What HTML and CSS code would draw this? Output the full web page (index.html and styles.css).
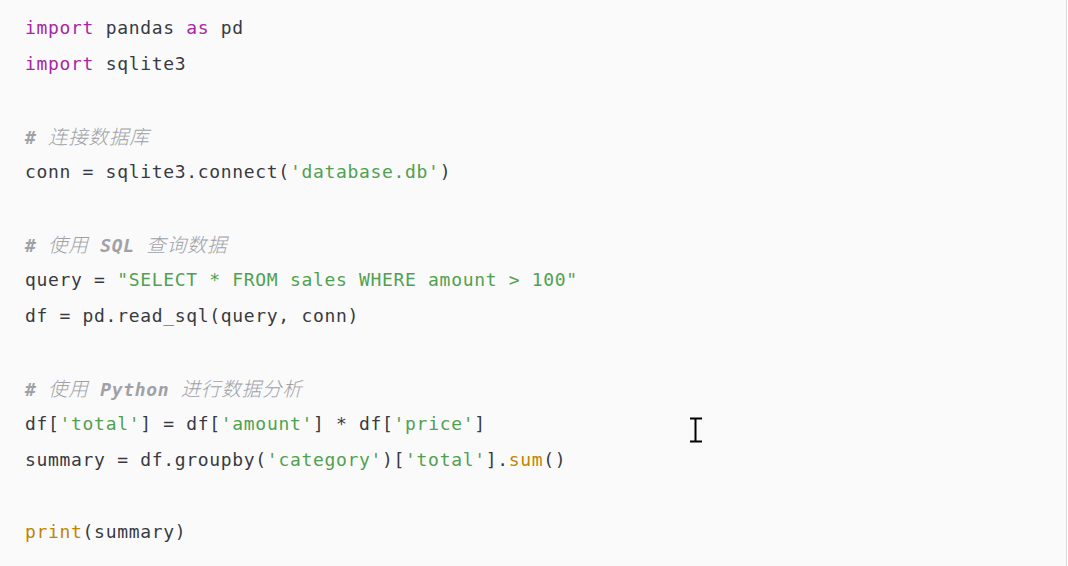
FILE: index.html
```html
<!DOCTYPE html>
<html lang="zh-CN">
<head>
<meta charset="utf-8">
<title>code</title>
<link rel="stylesheet" href="styles.css">
</head>
<body>
<div class="code-block">
<div class="code">
<div class="line"><span class="kw">import</span> pandas <span class="kw">as</span> pd</div>
<div class="line"><span class="kw">import</span> sqlite3</div>
<div class="line"> </div>
<div class="line"><span class="cm"><span class="lt">#</span> <span class="zh">连接数据库</span></span></div>
<div class="line">conn = sqlite3.connect(<span class="st">'database.db'</span>)</div>
<div class="line"> </div>
<div class="line"><span class="cm"><span class="lt">#</span> <span class="zh">使用</span> <span class="lt">SQL</span> <span class="zh">查询数据</span></span></div>
<div class="line">query = <span class="st">"SELECT * FROM sales WHERE amount &gt; 100"</span></div>
<div class="line">df = pd.read_sql(query, conn)</div>
<div class="line"> </div>
<div class="line"><span class="cm"><span class="lt">#</span> <span class="zh">使用</span> <span class="lt">Python</span> <span class="zh">进行数据分析</span></span></div>
<div class="line">df[<span class="st">'total'</span>] = df[<span class="st">'amount'</span>] * df[<span class="st">'price'</span>]</div>
<div class="line">summary = df.groupby(<span class="st">'category'</span>)[<span class="st">'total'</span>].<span class="fn">sum</span>()</div>
<div class="line"> </div>
<div class="line"><span class="fn">print</span>(summary)</div>
</div>
<svg class="cursor" width="14" height="26" viewBox="0 0 14 26" aria-hidden="true">
<path d="M1 1.5h12M1 24.5h12M6.5 1.5v23" stroke="#000" stroke-width="2" fill="none"/>
</svg>
</div>
</body>
</html>
```

FILE: styles.css
```css
html, body {
  margin: 0;
  padding: 0;
  background: #ffffff;
}

.code-block {
  position: relative;
  width: 1066px;
  height: 566px;
  background: #fafafa;
  border-right: 1px solid #dcdcdc;
  overflow: hidden;
}

.code {
  padding: 10px 0 0 25px;
  font-family: "DejaVu Sans Mono", "Noto Sans CJK SC", monospace;
  font-size: 18px;
  letter-spacing: 0.68px;
  line-height: 36px;
  color: #383a42;
}

.line {
  height: 36px;
  white-space: pre;
}

.kw { color: #a626a4; }
.st { color: #50a14f; }
.fn { color: #c18401; }

.cm {
  color: #a0a1a7;
  font-style: italic;
}

.cm .lt {
  font-weight: 700;
}

.cm .zh {
  font-family: "Noto Sans CJK SC", sans-serif;
  font-size: 19.6px;
  font-weight: 300;
}

.cursor {
  position: absolute;
  left: 689px;
  top: 417px;
}
```
